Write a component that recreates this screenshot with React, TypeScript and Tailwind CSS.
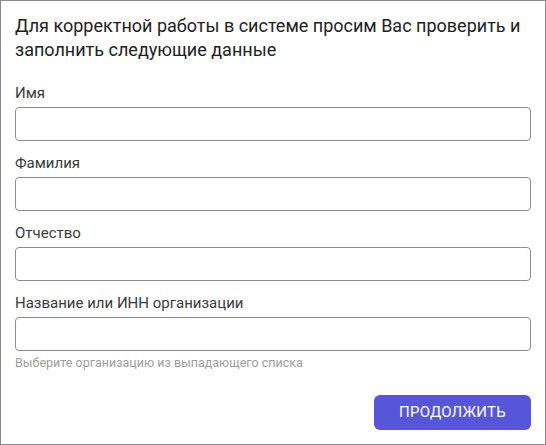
import React from "react";

const fields = ["Имя", "Фамилия", "Отчество", "Название или ИНН организации"];

export default function App() {
  return (
    <div
      className="w-[546px] h-[445px] bg-white border border-[#8a8a8a] px-[14px] pt-[13px] text-[#212121]"
      style={{ fontFamily: "Roboto, 'Noto Sans', sans-serif" }}
    >
      <h1 className="text-[18px] leading-[24px] font-normal text-[#212121] mb-[21px]">
        Для корректной работы в системе просим Вас проверить и заполнить следующие данные
      </h1>

      {fields.map((label, i) => (
        <div key={label} className={i === fields.length - 1 ? "" : "mb-[12px]"}>
          <div className="text-[15px] leading-[20px] text-[#3a3a3a] mb-[4px]">{label}</div>
          <input
            type="text"
            className="block w-full h-[34px] rounded-[4px] border border-[#8c8c8c] bg-white px-3 text-[14px] outline-none"
          />
        </div>
      ))}

      <div className="text-[12.5px] leading-[16px] text-[#9e9e9e] mt-[4px]">
        Выберите организацию из выпадающего списка
      </div>

      <div className="flex justify-end mt-[24px]">
        <button className="w-[157px] h-[35px] rounded-[6px] bg-[#5755d9] text-white text-[15px] uppercase tracking-[0.2px]">
          Продолжить
        </button>
      </div>
    </div>
  );
}
